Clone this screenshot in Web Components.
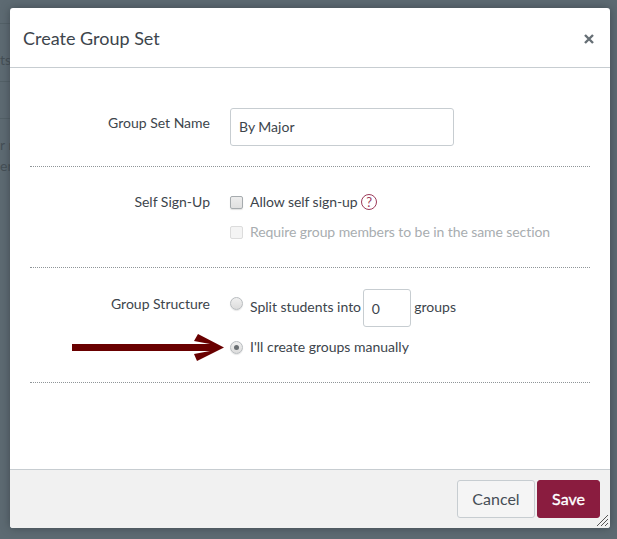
<!DOCTYPE html>
<html>
<head>
<meta charset="utf-8">
<title>Create Group Set</title>
<style>
  html, body { margin: 0; padding: 0; height: 100%; background: #5d6a72; }
  body { font-family: Lato, "Open Sans", sans-serif; color: #3d454c; }
</style>
</head>
<body>
<group-set-backdrop>
  <group-set-dialog heading="Create Group Set">
    <form-row label="Group Set Name">
      <text-box class="name" value="By Major" box-width="224"></text-box>
    </form-row>
    <form-row label="Self Sign-Up" compact>
      <check-line><span>Allow self sign-up </span><help-icon></help-icon></check-line>
      <check-line disabled><span>Require group members to be in the same section</span></check-line>
    </form-row>
    <form-row label="Group Structure" structure>
      <radio-line class="split"><span>Split students into </span><text-box class="count" value="0" box-width="48"></text-box><span> groups</span></radio-line>
      <radio-line checked><span>I'll create groups manually</span></radio-line>
    </form-row>
    <big-arrow></big-arrow>
    <kbd-btn slot="footer">Cancel</kbd-btn>
    <kbd-btn slot="footer" primary>Save</kbd-btn>
  </group-set-dialog>
</group-set-backdrop>

<script>
class GroupSetBackdrop extends HTMLElement {
  constructor() {
    super();
    this.attachShadow({ mode: "open" });
    this.shadowRoot.innerHTML = `
      <style>
        :host { display: block; position: relative; width: 617px; height: 539px; overflow: hidden;
                background: #5d6a72; box-sizing: border-box; padding: 8px 7px 11px 10px; }
        .ghost { position: absolute; left: 0; top: 0; width: 40px; height: 539px; }
        .ghost i { position: absolute; left: 0; width: 10px; height: 1px; background: #536067; }
        .ghost span { position: absolute; left: 0; font-size: 14px; color: #454f56; white-space: pre; }
        .shadow { display: block; height: 100%; border-radius: 4px; box-shadow: 0 0 8px rgba(40,50,55,.55); position: relative; }
      </style>
      <div class="ghost">
        <i style="top:23px"></i><i style="top:81px"></i><i style="top:118px"></i>
        <span style="top:51px">ts</span>
        <span style="top:136px">r n</span>
        <span style="top:157px">er</span>
      </div>
      <div class="shadow"><slot></slot></div>`;
  }
}
customElements.define("group-set-backdrop", GroupSetBackdrop);

class GroupSetDialog extends HTMLElement {
  constructor() {
    super();
    this.attachShadow({ mode: "open" });
    this.shadowRoot.innerHTML = `
      <style>
        :host { display: flex; flex-direction: column; height: 100%; background: #fff; border-radius: 3px;
                overflow: hidden; position: relative; }
        header { height: 59px; flex: none; border-bottom: 1px solid #c7cdd1; display: flex; align-items: center;
                 justify-content: space-between; padding: 0 16px 0 13px; }
        h1 { margin: 0; font: 400 18px/22px Lato, sans-serif; color: #3d454c; }
        .close { width: 10px; height: 10px; display: block; position: relative; top: 1px; }
        main { flex: 1; padding: 0 20px; position: relative; }
        footer { flex: none; height: 59px; box-sizing: border-box; background: #f1f1f1; border-top: 1px solid #c7cdd1;
                 display: flex; justify-content: flex-end; align-items: flex-start; gap: 2px; padding: 10px 10px 0 0; position: relative; }
        .grip { position: absolute; right: 1px; bottom: 1px; width: 13px; height: 13px; }
      </style>
      <header>
        <h1>${this.getAttribute("heading")}</h1>
        <svg class="close" viewBox="0 0 10 10"><path d="M1 1L9 9M9 1L1 9" stroke="#666f75" stroke-width="2.4"/></svg>
      </header>
      <main><slot></slot></main>
      <footer>
        <slot name="footer"></slot>
        <svg class="grip" viewBox="0 0 13 13"><path d="M1 12L12 1M5 12L12 5M9 12L12 9" stroke="#555" stroke-width="1"/></svg>
      </footer>`;
  }
}
customElements.define("group-set-dialog", GroupSetDialog);

class FormRow extends HTMLElement {
  constructor() {
    super();
    this.attachShadow({ mode: "open" });
    this.shadowRoot.innerHTML = `
      <style>
        :host { display: grid; grid-template-columns: 180px 1fr; column-gap: 20px; border-bottom: 1px dotted #8f9598;
                padding: 40px 0 0; height: 99px; box-sizing: border-box; }
        :host([compact]) { padding: 20px 0 0; height: 101px; }
        :host([structure]) { padding: 21px 0 0; height: 115px; }
        .label { text-align: right; font-size: 14px; line-height: 20px; color: #3d454c; padding-top: 5px; }
        .control { display: flex; flex-direction: column; align-items: flex-start; }
      </style>
      <div class="label">${this.getAttribute("label")}</div>
      <div class="control"><slot></slot></div>`;
  }
}
customElements.define("form-row", FormRow);

class TextBox extends HTMLElement {
  constructor() {
    super();
    this.attachShadow({ mode: "open" });
    this.shadowRoot.innerHTML = `
      <style>
        :host { display: inline-flex; align-items: center; height: 38px; box-sizing: border-box;
                width: ${this.getAttribute("box-width")}px; background: #fff; border: 1px solid #c7cdd1; border-radius: 3px;
                padding: 0 8px; font-size: 14px; color: #3d454c; }
        :host(.name) { padding-bottom: 2px; }
        :host(.count) { margin-left: -2px; }
      </style>
      <span>${this.getAttribute("value")}</span>`;
  }
}
customElements.define("text-box", TextBox);

class CheckLine extends HTMLElement {
  constructor() {
    super();
    this.attachShadow({ mode: "open" });
    this.shadowRoot.innerHTML = `
      <style>
        :host { display: flex; align-items: center; height: 30px; font-size: 14px; color: #3d454c; white-space: pre; letter-spacing: -.05px; }
        :host([disabled]) { color: #a8adb0; letter-spacing: -.08px; }
        ::slotted(span) { padding-bottom: 2px; }
        .box { width: 11px; height: 11px; border: 1px solid #a6abae; border-radius: 2px; background: linear-gradient(#ededed, #e0e0e0);
               box-shadow: 0 1px 1px rgba(0,0,0,.12); margin-right: 7px; flex: none; }
        :host([disabled]) .box { border-color: #dcdcdc; background: #f4f4f4; box-shadow: none; }
      </style>
      <span class="box"></span><slot></slot>`;
  }
}
customElements.define("check-line", CheckLine);

class RadioLine extends HTMLElement {
  constructor() {
    super();
    this.attachShadow({ mode: "open" });
    const dot = this.hasAttribute("checked") ? "<i></i>" : "";
    this.shadowRoot.innerHTML = `
      <style>
        :host { display: flex; align-items: center; font-size: 14px; color: #3d454c; white-space: pre; height: 38px; }
        :host(.split) { margin-bottom: 1px; }
        ::slotted(span) { padding-bottom: 2px; }
        :host(.split) ::slotted(span) { padding-bottom: 3px; }
        .dot { width: 11px; height: 11px; border: 1px solid #b8bcbf; border-radius: 50%; margin-right: 7px; flex: none;
               background: linear-gradient(#f0f0f0, #dcdcdc); display: flex; align-items: center; justify-content: center;
               box-shadow: 0 1px 1px rgba(0,0,0,.1); }
        :host(.split) .dot { position: relative; top: -5px; }
        i { width: 5px; height: 5px; border-radius: 50%; background: #6a6f73; display: block; }
      </style>
      <span class="dot">${dot}</span><slot></slot>`;
  }
}
customElements.define("radio-line", RadioLine);

class HelpIcon extends HTMLElement {
  constructor() {
    super();
    this.attachShadow({ mode: "open" });
    this.shadowRoot.innerHTML = `
      <style>
        :host { display: inline-flex; align-items: center; justify-content: center; width: 16px; height: 16px;
                border: 1px solid #9c3a5a; border-radius: 50%; box-sizing: border-box;
                font-size: 13px; line-height: 14px; color: #9c3a5a; }
      </style>?`;
  }
}
customElements.define("help-icon", HelpIcon);

class BigArrow extends HTMLElement {
  constructor() {
    super();
    this.attachShadow({ mode: "open" });
    this.shadowRoot.innerHTML = `
      <style>
        :host { position: absolute; left: 62px; top: 265px; width: 154px; height: 30px; display: block; }
        svg { display: block; }
      </style>
      <svg width="154" height="30" viewBox="0 0 154 30">
        <path d="M0 11H138L122 8 126 1 152 14.5 125 28 122 21 138 18H0Z" fill="#690000"/>
      </svg>`;
  }
}
customElements.define("big-arrow", BigArrow);

class KbdBtn extends HTMLElement {
  constructor() {
    super();
    this.attachShadow({ mode: "open" });
    this.shadowRoot.innerHTML = `
      <style>
        :host { display: inline-flex; align-items: center; justify-content: center; height: 38px; box-sizing: border-box;
                padding: 0 14px 1px; min-width: 78px; border: 1px solid #c7cdd1; border-radius: 3px; background: #f5f5f5;
                font-size: 16px; color: #464e55; }
        :host([primary]) { background: #8a1c3f; border-color: #8a1c3f; color: #fff; min-width: 63px; -webkit-text-stroke: .35px #fff; }
      </style>
      <slot></slot>`;
  }
}
customElements.define("kbd-btn", KbdBtn);
</script>
</body>
</html>
